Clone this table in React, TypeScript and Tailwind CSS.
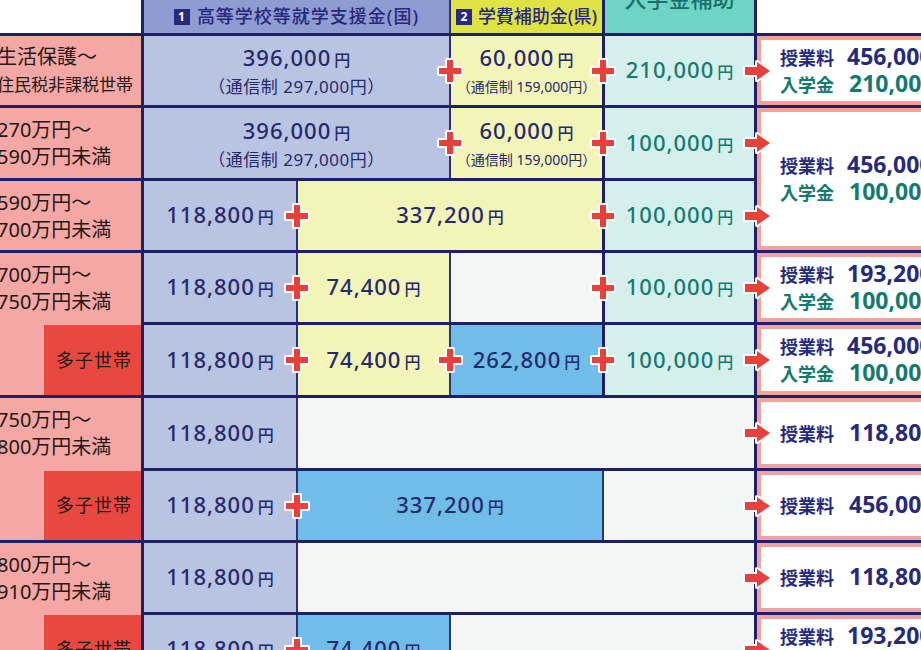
import React from 'react';

const NAVY_BG = 'bg-[#1d2064]';

function Plus({ pos }: { pos: string }) {
  return (
    <svg
      className={`absolute top-1/2 -translate-y-1/2 z-10 ${pos}`}
      width="30"
      height="30"
      viewBox="0 0 30 30"
    >
      <path
        d="M12 4h6v8h8v6h-8v8h-6v-8H4v-6h8z"
        fill="#e8413b"
        stroke="#fff"
        strokeWidth="4"
        strokeLinejoin="round"
        paintOrder="stroke"
      />
    </svg>
  );
}

function Arrow() {
  return (
    <svg
      className="absolute left-[598px] top-1/2 -translate-y-1/2 z-10"
      width="32"
      height="24"
      viewBox="0 0 32 24"
    >
      <path
        d="M3 8h12V3l13 9-13 9v-5H3z"
        fill="#e8413b"
        stroke="#fff"
        strokeWidth="4"
        strokeLinejoin="round"
        paintOrder="stroke"
      />
    </svg>
  );
}

function Thin() {
  return <div className="w-[2px] bg-[#2e3274]" />;
}

function Thick() {
  return <div className="w-[3px] bg-[#1d2064]" />;
}

function Cell({ className, children }: { className: string; children?: React.ReactNode }) {
  return <div className={`flex items-center justify-center ${className}`}>{children}</div>;
}

function Amt({ v, sub, small, teal }: { v: string; sub?: string; small?: boolean; teal?: boolean }) {
  return (
    <div className={`flex flex-col items-center ${teal ? 'text-[#157a72]' : 'text-[#252a6c]'}`}>
      <div className="flex items-baseline leading-[26px]">
        <span className="text-[22px] font-medium tracking-[1px]">{v}</span>
        <span className="ml-[3px] text-[16px] font-medium">円</span>
      </div>
      {sub && (
        <div
          className={`mt-[4px] whitespace-nowrap leading-[20px] ${
            small ? 'text-[14px]' : 'text-[17px] tracking-[0.5px]'
          }`}
        >
          （通信制 {sub}円）
        </div>
      )}
    </div>
  );
}

function Row({
  h,
  plus = [],
  children,
}: {
  h: string;
  plus?: string[];
  children: React.ReactNode;
}) {
  return (
    <div className={`relative flex ${h}`}>
      {children}
      {plus.map((p) => (
        <Plus key={p} pos={p} />
      ))}
      <Arrow />
    </div>
  );
}

function Label({ lines, className = '' }: { lines: React.ReactNode[]; className?: string }) {
  return (
    <div
      className={`flex flex-col justify-center bg-[#f4a7a4] pl-[17px] text-[20px] leading-[27px] text-[#231815] ${className}`}
    >
      {lines.map((l, i) => (
        <div key={i} className="whitespace-nowrap">
          {l}
        </div>
      ))}
    </div>
  );
}

function Tashi({ h }: { h: string }) {
  return (
    <div className={`flex bg-[#f4a7a4] ${h}`}>
      <div className="ml-[64px] flex flex-1 items-center justify-end bg-[#e8483f] pr-[9px] text-[18px] tracking-[1px] text-[#231815]">
        多子世帯
      </div>
    </div>
  );
}

function Box({ fee, entry, h }: { fee: string; entry?: string; h: string }) {
  return (
    <div
      className={`flex flex-col justify-center border-[4px] border-r-0 border-[#f4a19c] bg-white pl-[19px] font-bold leading-[25px] ${h}`}
    >
      <div className="flex items-baseline whitespace-nowrap text-[#252a7a]">
        <span className="text-[18px]">授業料</span>
        <span className={`${entry ? 'ml-[13px]' : 'ml-[15px]'} text-[23px]`}>{fee}円</span>
      </div>
      {entry && (
        <div className="flex items-baseline whitespace-nowrap text-[#137a70]">
          <span className="text-[18px]">入学金</span>
          <span className="ml-[15px] text-[23px]">{entry}円</span>
        </div>
      )}
    </div>
  );
}

const LAV = 'bg-[#b9c3e2]';
const YEL = 'bg-[#f2f4b8]';
const BLUE = 'bg-[#6fbde8]';
const EMPTY = 'bg-[#f4f6f5]';
const TEAL = 'bg-[#d5f0ec]';

const P1 = 'left-[138px]';
const P2 = 'left-[291px]';
const P3 = 'left-[444px]';

export default function App() {
  return (
    <div className="h-[650px] w-[921px] overflow-hidden bg-white font-['Noto_Sans','Noto_Sans_CJK_JP',sans-serif]">
      <div className={`-ml-[20px] -mt-[40px] flex w-[977px] flex-col gap-[3px] ${NAVY_BG}`}>
        {/* header */}
        <div className="flex h-[73px] gap-[3px]">
          <div className="w-[161px] bg-white" />
          <div className="flex w-[458px] flex-col">
            <div className="h-[40px] bg-[#8e9cd1]" />
            <div className="flex h-[33px]">
              <div className="flex w-[305px] items-center justify-center bg-[#8e9cd1] text-[18px] font-medium tracking-[1px] text-[#27297a]">
                <span className="mr-[7px] inline-flex h-[16px] w-[16px] items-center justify-center bg-[#27297a] text-[12px] font-bold leading-none text-white">
                  1
                </span>
                高等学校等就学支援金(国)
              </div>
              <Thin />
              <div className="flex w-[151px] items-center justify-center bg-[#dfe245] text-[18px] font-medium text-[#27297a]">
                <span className="mr-[6px] inline-flex h-[16px] w-[16px] items-center justify-center bg-[#27297a] text-[12px] font-bold leading-none text-white">
                  2
                </span>
                学費補助金(県)
              </div>
            </div>
          </div>
          <div className="flex w-[149px] items-center justify-center bg-[#70d4c4] pt-[4px] text-[22px] font-medium text-[#17706a]">
            入学金補助
          </div>
          <div className="w-[200px] bg-white" />
        </div>

        {/* 生活保護 */}
        <div className="flex gap-[3px]">
          <Label
            className="w-[161px] h-[69px]"
            lines={['生活保護～', <span className="text-[17px]">住民税非課税世帯</span>]}
          />
          <div className="w-[610px]">
            <Row h="h-[69px]" plus={[P2, P3]}>
              <Cell className={`w-[305px] ${LAV}`}>
                <Amt v="396,000" sub="297,000" />
              </Cell>
              <Thin />
              <Cell className={`w-[151px] ${YEL}`}>
                <Amt v="60,000" sub="159,000" small />
              </Cell>
              <Thick />
              <Cell className={`w-[149px] ${TEAL}`}>
                <Amt v="210,000" teal />
              </Cell>
            </Row>
          </div>
          <div className="w-[200px]">
            <Box h="h-[69px]" fee="456,000" entry="210,000" />
          </div>
        </div>

        {/* 270〜700 */}
        <div className="flex gap-[3px]">
          <div className="flex w-[161px] flex-col gap-[3px]">
            <Label className="h-[70px]" lines={['270万円～', '590万円未満']} />
            <Label className="h-[69px]" lines={['590万円～', '700万円未満']} />
          </div>
          <div className="flex w-[610px] flex-col gap-[3px]">
            <Row h="h-[70px]" plus={[P2, P3]}>
              <Cell className={`w-[305px] ${LAV}`}>
                <Amt v="396,000" sub="297,000" />
              </Cell>
              <Thin />
              <Cell className={`w-[151px] ${YEL}`}>
                <Amt v="60,000" sub="159,000" small />
              </Cell>
              <Thick />
              <Cell className={`w-[149px] ${TEAL}`}>
                <Amt v="100,000" teal />
              </Cell>
            </Row>
            <Row h="h-[69px]" plus={[P1, P3]}>
              <Cell className={`w-[152px] ${LAV}`}>
                <Amt v="118,800" />
              </Cell>
              <Thin />
              <Cell className={`w-[304px] ${YEL}`}>
                <Amt v="337,200" />
              </Cell>
              <Thick />
              <Cell className={`w-[149px] ${TEAL}`}>
                <Amt v="100,000" teal />
              </Cell>
            </Row>
          </div>
          <div className="w-[200px]">
            <Box h="h-[142px]" fee="456,000" entry="100,000" />
          </div>
        </div>

        {/* 700〜750 */}
        <div className="flex gap-[3px]">
          <div className="flex w-[161px] flex-col">
            <Label className="h-[72px] pb-[3px]" lines={['700万円～', '750万円未満']} />
            <Tashi h="h-[70px]" />
          </div>
          <div className="flex w-[610px] flex-col gap-[3px]">
            <Row h="h-[69px]" plus={[P1, P3]}>
              <Cell className={`w-[152px] ${LAV}`}>
                <Amt v="118,800" />
              </Cell>
              <Thin />
              <Cell className={`w-[151px] ${YEL}`}>
                <Amt v="74,400" />
              </Cell>
              <Thin />
              <Cell className={`w-[151px] ${EMPTY}`} />
              <Thick />
              <Cell className={`w-[149px] ${TEAL}`}>
                <Amt v="100,000" teal />
              </Cell>
            </Row>
            <Row h="h-[70px]" plus={[P1, P2, P3]}>
              <Cell className={`w-[152px] ${LAV}`}>
                <Amt v="118,800" />
              </Cell>
              <Thin />
              <Cell className={`w-[151px] ${YEL}`}>
                <Amt v="74,400" />
              </Cell>
              <Thin />
              <Cell className={`w-[151px] ${BLUE}`}>
                <Amt v="262,800" />
              </Cell>
              <Thick />
              <Cell className={`w-[149px] ${TEAL}`}>
                <Amt v="100,000" teal />
              </Cell>
            </Row>
          </div>
          <div className="flex w-[200px] flex-col gap-[3px]">
            <Box h="h-[69px]" fee="193,200" entry="100,000" />
            <Box h="h-[70px]" fee="456,000" entry="100,000" />
          </div>
        </div>

        {/* 750〜800 */}
        <div className="flex gap-[3px]">
          <div className="flex w-[161px] flex-col">
            <Label className="h-[73px] pb-[3px]" lines={['750万円～', '800万円未満']} />
            <Tashi h="h-[69px]" />
          </div>
          <div className="flex w-[610px] flex-col gap-[3px]">
            <Row h="h-[70px]">
              <Cell className={`w-[152px] ${LAV}`}>
                <Amt v="118,800" />
              </Cell>
              <Thin />
              <Cell className={`w-[456px] ${EMPTY}`} />
            </Row>
            <Row h="h-[69px]" plus={[P1]}>
              <Cell className={`w-[152px] ${LAV}`}>
                <Amt v="118,800" />
              </Cell>
              <Thin />
              <Cell className={`w-[304px] ${BLUE}`}>
                <Amt v="337,200" />
              </Cell>
              <Thin />
              <Cell className={`w-[150px] ${EMPTY}`} />
            </Row>
          </div>
          <div className="flex w-[200px] flex-col gap-[3px]">
            <Box h="h-[70px]" fee="118,800" />
            <Box h="h-[69px]" fee="456,000" />
          </div>
        </div>

        {/* 800〜910 */}
        <div className="flex gap-[3px]">
          <div className="flex w-[161px] flex-col">
            <Label className="h-[72px] pb-[3px]" lines={['800万円～', '910万円未満']} />
            <Tashi h="h-[69px]" />
          </div>
          <div className="flex w-[610px] flex-col gap-[3px]">
            <Row h="h-[69px]">
              <Cell className={`w-[152px] ${LAV}`}>
                <Amt v="118,800" />
              </Cell>
              <Thin />
              <Cell className={`w-[456px] ${EMPTY}`} />
            </Row>
            <Row h="h-[69px]" plus={[P1]}>
              <Cell className={`w-[152px] ${LAV}`}>
                <Amt v="118,800" />
              </Cell>
              <Thin />
              <Cell className={`w-[151px] ${BLUE}`}>
                <Amt v="74,400" />
              </Cell>
              <Thin />
              <Cell className={`w-[303px] ${EMPTY}`} />
            </Row>
          </div>
          <div className="flex w-[200px] flex-col gap-[3px]">
            <Box h="h-[69px]" fee="118,800" />
            <Box h="h-[69px]" fee="193,200" entry="100,000" />
          </div>
        </div>
      </div>
    </div>
  );
}
